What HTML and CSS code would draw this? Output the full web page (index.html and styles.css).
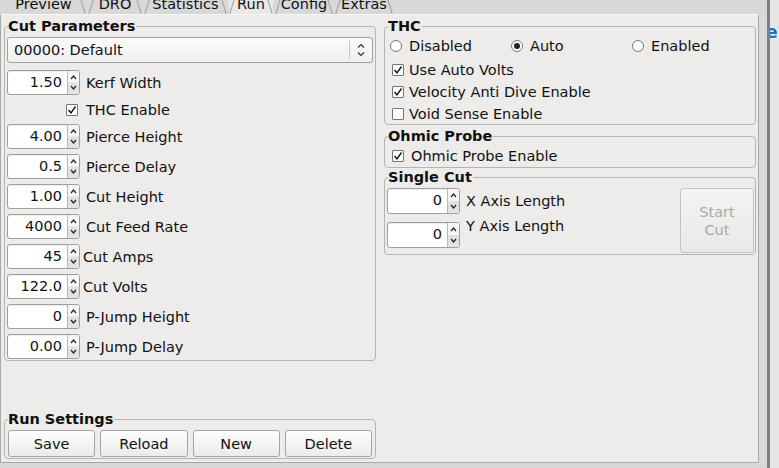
FILE: index.html
```html
<!DOCTYPE html>
<html>
<head>
<meta charset="utf-8">
<link rel="stylesheet" href="styles.css">
</head>
<body>
<div class="window">
  <div class="main">
    <div class="tabbar">
      <div class="tab t-preview">Preview</div>
      <div class="tab t-dro">DRO</div>
      <div class="tab t-stats">Statistics</div>
      <div class="tab t-run active">Run</div>
      <div class="tab t-config">Config</div>
      <div class="tab t-extras">Extras</div>
    </div>
    <div class="mid">
      <div class="panel">
        <div class="col">
          <fieldset class="group cut">
            <legend>Cut Parameters</legend>
            <div class="combo">
              <span class="combo-text">00000: Default</span>
              <span class="combo-btn"><svg width="10" height="16" viewBox="0 0 10 16"><polyline points="2,5.5 5,2.5 8,5.5" fill="none" stroke="#333" stroke-width="1.2"/><polyline points="2,10.5 5,13.5 8,10.5" fill="none" stroke="#333" stroke-width="1.2"/></svg></span>
            </div>
            <div class="row"><div class="spin"><span class="val">1.50</span><span class="arrows"><svg width="11" height="23" viewBox="0 0 11 23"><polyline points="3,8 5.5,5 8,8" fill="none" stroke="#222" stroke-width="1.2"/><polyline points="3,15 5.5,18 8,15" fill="none" stroke="#222" stroke-width="1.2"/></svg></span></div><span class="lbl">Kerf Width</span></div>
            <div class="row check-row thc-en"><span class="check"><svg width="10" height="10" viewBox="0 0 10 10"><path d="M1.5 5 L4 7.8 L8.5 1.5" fill="none" stroke="#111" stroke-width="1.4"/></svg></span><span>THC Enable</span></div>
            <div class="row"><div class="spin"><span class="val">4.00</span><span class="arrows"><svg width="11" height="23" viewBox="0 0 11 23"><polyline points="3,8 5.5,5 8,8" fill="none" stroke="#222" stroke-width="1.2"/><polyline points="3,15 5.5,18 8,15" fill="none" stroke="#222" stroke-width="1.2"/></svg></span></div><span class="lbl">Pierce Height</span></div>
            <div class="row"><div class="spin"><span class="val">0.5</span><span class="arrows"><svg width="11" height="23" viewBox="0 0 11 23"><polyline points="3,8 5.5,5 8,8" fill="none" stroke="#222" stroke-width="1.2"/><polyline points="3,15 5.5,18 8,15" fill="none" stroke="#222" stroke-width="1.2"/></svg></span></div><span class="lbl">Pierce Delay</span></div>
            <div class="row"><div class="spin"><span class="val">1.00</span><span class="arrows"><svg width="11" height="23" viewBox="0 0 11 23"><polyline points="3,8 5.5,5 8,8" fill="none" stroke="#222" stroke-width="1.2"/><polyline points="3,15 5.5,18 8,15" fill="none" stroke="#222" stroke-width="1.2"/></svg></span></div><span class="lbl">Cut Height</span></div>
            <div class="row"><div class="spin"><span class="val">4000</span><span class="arrows"><svg width="11" height="23" viewBox="0 0 11 23"><polyline points="3,8 5.5,5 8,8" fill="none" stroke="#222" stroke-width="1.2"/><polyline points="3,15 5.5,18 8,15" fill="none" stroke="#222" stroke-width="1.2"/></svg></span></div><span class="lbl">Cut Feed Rate</span></div>
            <div class="row"><div class="spin"><span class="val">45</span><span class="arrows"><svg width="11" height="23" viewBox="0 0 11 23"><polyline points="3,8 5.5,5 8,8" fill="none" stroke="#222" stroke-width="1.2"/><polyline points="3,15 5.5,18 8,15" fill="none" stroke="#222" stroke-width="1.2"/></svg></span></div><span class="lbl tight">Cut Amps</span></div>
            <div class="row"><div class="spin"><span class="val">122.0</span><span class="arrows"><svg width="11" height="23" viewBox="0 0 11 23"><polyline points="3,8 5.5,5 8,8" fill="none" stroke="#222" stroke-width="1.2"/><polyline points="3,15 5.5,18 8,15" fill="none" stroke="#222" stroke-width="1.2"/></svg></span></div><span class="lbl tight">Cut Volts</span></div>
            <div class="row"><div class="spin"><span class="val">0</span><span class="arrows"><svg width="11" height="23" viewBox="0 0 11 23"><polyline points="3,8 5.5,5 8,8" fill="none" stroke="#222" stroke-width="1.2"/><polyline points="3,15 5.5,18 8,15" fill="none" stroke="#222" stroke-width="1.2"/></svg></span></div><span class="lbl">P-Jump Height</span></div>
            <div class="row"><div class="spin"><span class="val">0.00</span><span class="arrows"><svg width="11" height="23" viewBox="0 0 11 23"><polyline points="3,8 5.5,5 8,8" fill="none" stroke="#222" stroke-width="1.2"/><polyline points="3,15 5.5,18 8,15" fill="none" stroke="#222" stroke-width="1.2"/></svg></span></div><span class="lbl">P-Jump Delay</span></div>
          </fieldset>
          <fieldset class="group runset">
            <legend>Run Settings</legend>
            <div class="btns">
              <button class="btn">Save</button>
              <button class="btn">Reload</button>
              <button class="btn">New</button>
              <button class="btn">Delete</button>
            </div>
          </fieldset>
        </div>
        <div class="col right">
          <fieldset class="group thc">
            <legend>THC</legend>
            <div class="radios">
              <div class="opt"><span class="radio"></span><span>Disabled</span></div>
              <div class="opt"><span class="radio on"></span><span>Auto</span></div>
              <div class="opt"><span class="radio"></span><span>Enabled</span></div>
            </div>
            <div class="check-row"><span class="check"><svg width="10" height="10" viewBox="0 0 10 10"><path d="M1.5 5 L4 7.8 L8.5 1.5" fill="none" stroke="#111" stroke-width="1.4"/></svg></span><span>Use Auto Volts</span></div>
            <div class="check-row"><span class="check"><svg width="10" height="10" viewBox="0 0 10 10"><path d="M1.5 5 L4 7.8 L8.5 1.5" fill="none" stroke="#111" stroke-width="1.4"/></svg></span><span>Velocity Anti Dive Enable</span></div>
            <div class="check-row"><span class="check"></span><span>Void Sense Enable</span></div>
          </fieldset>
          <fieldset class="group ohmic">
            <legend>Ohmic Probe</legend>
            <div class="check-row wide"><span class="check"><svg width="10" height="10" viewBox="0 0 10 10"><path d="M1.5 5 L4 7.8 L8.5 1.5" fill="none" stroke="#111" stroke-width="1.4"/></svg></span><span>Ohmic Probe Enable</span></div>
          </fieldset>
          <fieldset class="group single">
            <legend>Single Cut</legend>
            <div class="sc">
              <div class="sc-rows">
                <div class="row"><div class="spin tall"><span class="val">0</span><span class="arrows"><svg width="11" height="24" viewBox="0 0 11 24"><polyline points="3,8 5.5,5 8,8" fill="none" stroke="#222" stroke-width="1.2"/><polyline points="3,16 5.5,19 8,16" fill="none" stroke="#222" stroke-width="1.2"/></svg></span></div><span class="lbl">X Axis Length</span></div>
                <div class="row top"><div class="spin tall"><span class="val">0</span><span class="arrows"><svg width="11" height="24" viewBox="0 0 11 24"><polyline points="3,8 5.5,5 8,8" fill="none" stroke="#222" stroke-width="1.2"/><polyline points="3,16 5.5,19 8,16" fill="none" stroke="#222" stroke-width="1.2"/></svg></span></div><span class="lbl raised">Y Axis Length</span></div>
              </div>
              <button class="btn start" disabled>Start<br>Cut</button>
            </div>
          </fieldset>
        </div>
      </div>
      <div class="filler"></div>
    </div>
    <div class="bottom"></div>
  </div>
  <div class="edge"><span class="peek">e</span></div>
</div>
</body>
</html>
```

FILE: styles.css
```css
* { box-sizing: border-box; }
html, body { margin: 0; padding: 0; }
body {
  font-family: "DejaVu Sans", "Liberation Sans", sans-serif;
  font-size: 14.5px;
  color: #111;
  background: #d9d9d9;
}
.window {
  width: 779px;
  height: 468px;
  display: flex;
  overflow: hidden;
}
.main {
  width: 767px;
  display: flex;
  flex-direction: column;
  background: #d9d9d9;
}
.tabbar {
  height: 14px;
  display: flex;
  overflow: hidden;
  background: #d8d8d8;
}
.tab {
  position: relative;
  height: 14px;
  line-height: 8px;
  text-align: center;
  white-space: nowrap;
  flex: none;
}
.tab::before, .tab::after {
  content: "";
  position: absolute;
  top: -4px;
  height: 18px;
  border-left: 1px solid #9c9c9c;
}
.tab::before { left: 4px; transform: skewX(-17deg); }
.tab::after { right: 4px; transform: skewX(17deg); }
.t-preview { width: 87px; }
.t-preview::before { display: none; }
.t-dro { width: 56px; }
.t-stats { width: 85px; }
.t-run { width: 46px; }
.t-config { width: 60px; }
.t-extras { width: 60px; }
.tab.active {
  background: #e9e8e6;
  clip-path: polygon(0 0, 100% 0, calc(100% - 2px) 100%, 2px 100%);
}
.mid {
  display: flex;
  height: 449px;
}
.panel {
  width: 759px;
  height: 449px;
  background: #edeceb;
  border: 1px solid #a9a9a9;
  border-top-color: #f7f7f7;
  border-radius: 0 2px 2px 0;
  display: grid;
  grid-template-columns: 372px 372px;
  column-gap: 8px;
  padding: 4px 1px 3px 3px;
}
.filler { flex: 1; background: #dadada; }
.bottom { flex: 1; background: #d7d7d7; }
.edge {
  width: 12px;
  border-left: 3px solid #7f7f7f;
  background: #e6e6e6;
  overflow: hidden;
  position: relative;
}
.peek {
  position: absolute;
  left: -4px;
  top: 22px;
  font-weight: bold;
  font-size: 17px;
  color: #1f6fb4;
}
.col {
  display: flex;
  flex-direction: column;
  justify-content: space-between;
}
.col.right { justify-content: flex-start; }
.group {
  margin: 0;
  min-width: 0;
  border: 1px solid #b4b4b2;
  border-radius: 4px;
  padding: 4px 2px 1px 2px;
}
.group legend {
  font-weight: bold;
  line-height: 14px;
  padding: 0 1px 0 0;
  margin-left: 1px;
}
.cut {
  display: flex;
  flex-direction: column;
  gap: 5px;
}
.combo {
  height: 26px;
  margin-bottom: 2px;
  border: 1px solid #a2a2a2;
  border-radius: 3px;
  background: linear-gradient(#fbfbfb, #efefee);
  display: flex;
  align-items: center;
}
.combo-text { flex: 1; padding-left: 6px; }
.combo-btn {
  width: 23px;
  height: 18px;
  border-left: 1px solid #c4c4c4;
  display: flex;
  align-items: center;
  justify-content: center;
}
.row {
  display: flex;
  align-items: center;
}
.spin {
  width: 73px;
  height: 25px;
  border: 1px solid #9e9e9e;
  border-radius: 3px;
  background: #fff;
  display: flex;
  box-shadow: inset 0 1px 1px rgba(0,0,0,0.08);
  flex: none;
}
.spin.tall { height: 26px; }
.val {
  flex: 1;
  text-align: right;
  padding-right: 5px;
  line-height: 23px;
}
.arrows {
  width: 12px;
  border-left: 1px solid #b8b8b8;
  background: linear-gradient(#f6f6f6 0%, #f6f6f6 48%, #e0e0e0 52%, #e4e4e4 100%);
  border-radius: 0 2px 2px 0;
  display: flex;
}
.lbl { margin-left: 6px; white-space: nowrap; }
.lbl.tight { margin-left: 3px; }
.check-row {
  display: flex;
  align-items: center;
  height: 20px;
  gap: 5px;
  padding-left: 5px;
}
.check-row.wide { gap: 7px; }
.thc-en { padding-left: 59px; gap: 8px; height: 19px; }
.check {
  width: 12px;
  height: 12px;
  border: 1px solid #747474;
  border-radius: 1px;
  background: #fff;
  display: flex;
  align-items: center;
  justify-content: center;
  flex: none;
}
.thc {
  display: flex;
  flex-direction: column;
  gap: 2px;
  padding: 3px 2px 0 2px;
}
.radios {
  display: grid;
  grid-template-columns: repeat(3, 1fr);
  padding-left: 3px;
  margin-bottom: 2px;
}
.opt {
  display: flex;
  align-items: center;
  height: 20px;
  gap: 7px;
}
.radio {
  width: 12px;
  height: 12px;
  border: 1px solid #777;
  border-radius: 50%;
  background: #fff;
  display: flex;
  align-items: center;
  justify-content: center;
}
.radio.on::after {
  content: "";
  width: 6px;
  height: 6px;
  border-radius: 50%;
  background: #222;
}
.ohmic {
  margin-top: 4px;
  padding: 3px 2px 1px 2px;
}
.single {
  margin-top: 2px;
  padding: 4px 1px 1px 2px;
}
.sc {
  display: flex;
  justify-content: space-between;
}
.sc-rows {
  display: flex;
  flex-direction: column;
  gap: 8px;
}
.row.top { align-items: flex-start; }
.lbl.raised { margin-top: -5px; line-height: 18px; }
.btns {
  display: grid;
  grid-template-columns: repeat(4, 1fr);
  gap: 5px;
  padding: 0 1px;
}
.runset { padding: 4px 2px 1px 2px; }
.btn {
  height: 27px;
  font-family: inherit;
  font-size: 14.5px;
  color: #111;
  border: 1px solid #a4a4a4;
  border-radius: 3px;
  background: linear-gradient(#fdfdfd, #ebebea);
  padding: 0;
}
.btn.start {
  width: 74px;
  height: 65px;
  color: #a9a9a9;
  border-color: #c4c4c4;
  background: linear-gradient(#f3f3f2, #e9e9e8);
  line-height: 18px;
}
```
